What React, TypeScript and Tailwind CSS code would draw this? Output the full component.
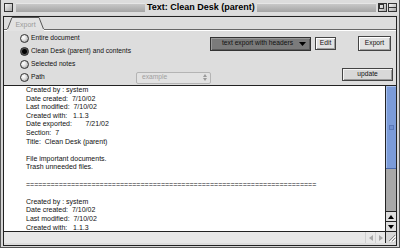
import React from "react";

function Radio({ checked }: { checked?: boolean }) {
  return (
    <div
      className={
        checked
          ? "w-[9px] h-[9px] rounded-full border border-[#222] shrink-0 bg-[radial-gradient(circle,#000_0,#000_2px,#555_3px,#bbb_100%)]"
          : "w-[9px] h-[9px] rounded-full border border-[#333] shrink-0 bg-[radial-gradient(circle_at_35%_35%,#fff_0,#e2e2e2_40%,#8f8f8f_100%)]"
      }
    />
  );
}

const lines1 = [
  "Created by : system",
  "Date created:  7/10/02",
  "Last modified:  7/10/02",
  "Created with:   1.1.3",
  "Date exported:       7/21/02",
  "Section:  7",
  "Title:  Clean Desk (parent)",
  "",
  "File important documents.",
  "Trash unneeded files.",
  "",
  "=".repeat(71),
  "",
  "Created by : system",
  "Date created:  7/10/02",
  "Last modified:  7/10/02",
  "Created with:   1.1.3",
];

export default function App() {
  return (
    <div className="w-[400px] h-[248px] bg-[#d6d6d6] flex flex-col border-x border-b border-[#555] overflow-hidden font-[family-name:Liberation_Sans,Arial,sans-serif] select-none">
      {/* Title bar */}
      <div className="h-[15px] shrink-0 flex items-center pl-[3px] pr-[2px] bg-[#dcdcdc]">
        <div className="w-[9px] h-[9px] border border-[#333] bg-[linear-gradient(135deg,#f4f4f4,#a8a8a8)] shrink-0" />
        <div className="ml-[3px] w-[129px] h-[9px] bg-[linear-gradient(#c8c8c8,#a4a4a4)] border-t border-[#e6e6e6]" />
        <div className="px-[2px] text-[9px] font-bold text-black leading-none whitespace-nowrap">
          Text: Clean Desk (parent)
        </div>
        <div className="flex-1 h-[9px] bg-[linear-gradient(#c8c8c8,#a4a4a4)] border-t border-[#e6e6e6]" />
        <div className="ml-[2px] w-[9px] h-[9px] border border-[#333] bg-[linear-gradient(135deg,#f4f4f4,#a8a8a8)] shrink-0 flex items-start justify-start">
          <div className="w-[5px] h-[5px] border border-[#333]" />
        </div>
        <div className="ml-[1px] w-[9px] h-[9px] border border-[#333] bg-[linear-gradient(135deg,#f4f4f4,#a8a8a8)] shrink-0 flex items-center">
          <div className="w-full h-[1px] bg-[#333]" />
        </div>
      </div>

      {/* Body */}
      <div className="flex-1 flex flex-col px-[2px] pt-[1px] pb-[1px]">
        <div className="flex-1 flex flex-col border border-[#222] bg-[#dddddd]">
          {/* Tab strip */}
          <div className="h-[12px] flex items-end pl-[3px]">
            <div className="relative w-[37px] h-[12px]">
              <svg className="absolute inset-0" width="37" height="12" viewBox="0 0 37 12">
                <path d="M0.5 12 L5 0.5 L32 0.5 L36.5 12" fill="#e2e2e2" stroke="#555" strokeWidth="1" />
              </svg>
              <div className="relative h-full flex items-center justify-center text-[7px] text-[#9a9a9a] leading-none pt-[2px]">
                Export
              </div>
            </div>
          </div>
          <div className="flex h-[2px]">
            <div className="w-[3px] border-t border-[#666] bg-white" />
            <div className="w-[37px] bg-[#e2e2e2]" />
            <div className="flex-1 border-t border-[#666] bg-white" />
          </div>

          {/* Panel */}
          <div className="h-[55px] flex border-b border-[#222] text-[6.7px] text-[#111] leading-none">
            <div className="w-[203px] shrink-0 flex flex-col pt-[1px] pl-[16px]">
              <div className="h-[13px] flex items-center gap-[2px]">
                <Radio />
                <span>Entire document</span>
              </div>
              <div className="h-[13px] flex items-center gap-[2px]">
                <Radio checked />
                <span>Clean Desk (parent) and contents</span>
              </div>
              <div className="h-[13px] flex items-center gap-[2px]">
                <Radio />
                <span>Selected notes</span>
              </div>
              <div className="h-[13px] flex items-center gap-[2px]">
                <Radio />
                <span className="w-[103px] shrink-0">Path</span>
                <div className="w-[75px] h-[12px] shrink-0 rounded-[2px] border border-[#b4b4b4] bg-[#e2e2e2] flex items-center pl-[5px] pr-[3px] text-[#a0a0a0]">
                  <span>example</span>
                  <svg className="ml-auto" width="4" height="7" viewBox="0 0 4 7">
                    <path d="M0 3 L4 3 L2 0 Z M0 4 L4 4 L2 7 Z" fill="#9a9a9a" />
                  </svg>
                </div>
              </div>
            </div>
            <div className="flex-1 flex flex-col pt-[5px] pb-[4px] pl-[3px]">
              <div className="flex items-center h-[15px]">
                <div className="w-[101px] h-[14px] bg-[#7b7b7b] border border-[#333] shadow-[inset_1px_1px_0_#9a9a9a,inset_-1px_-1px_0_#5a5a5a] flex items-center pl-[11px] pr-[4px] text-[#111]">
                  <span className="whitespace-nowrap">text export with headers</span>
                  <svg className="ml-auto" width="7" height="4" viewBox="0 0 7 4">
                    <path d="M0 0 L7 0 L3.5 4 Z" fill="#000" />
                  </svg>
                </div>
                <div className="ml-[4px] w-[21px] h-[13px] border border-[#444] bg-[#e2e2e2] shadow-[inset_1px_1px_0_#fff,inset_-1px_-1px_0_#a0a0a0] flex items-center justify-center">
                  Edit
                </div>
                <div className="ml-[22px] w-[33px] h-[15px] border border-[#444] bg-[#e2e2e2] shadow-[inset_1px_1px_0_#fff,inset_-1px_-1px_0_#a0a0a0] flex items-center justify-center">
                  Export
                </div>
              </div>
              <div className="mt-auto flex">
                <div className="ml-[132px] w-[51px] h-[13px] border border-[#444] bg-[#d8d8d8] shadow-[inset_1px_1px_0_#f4f4f4,inset_-1px_-1px_0_#999] flex items-center justify-center">
                  update
                </div>
              </div>
            </div>
          </div>

          {/* Text area */}
          <div className="h-[146px] flex border-b border-[#222]">
            <div className="flex-1 bg-white pl-[22px] pt-[0px] text-[7px] leading-[8.6px] text-[#111] overflow-hidden">
              {lines1.map((l, i) => (
                <div key={i} className="h-[8.6px] whitespace-pre">
                  {l === "" ? "\u00a0" : l}
                </div>
              ))}
            </div>
            <div className="w-[11px] border-l border-[#222] flex flex-col">
              <div className="h-[83px] bg-[#7b9bd8] border-b border-[#4a68a8] shadow-[inset_1px_1px_0_#a8c0ec] flex items-center justify-center">
                <div className="w-[5px] h-[5px] border border-[#5a78b8] bg-[#7090d0]" />
              </div>
              <div className="flex-1 bg-[#a8a8a8]" />
              <div className="h-[10px] border-t border-[#222] bg-[#dedede] flex items-center justify-center">
                <svg width="6" height="4" viewBox="0 0 6 4">
                  <path d="M0 4 L6 4 L3 0 Z" fill="#000" />
                </svg>
              </div>
              <div className="h-[10px] border-t border-[#222] bg-[#dedede] flex items-center justify-center">
                <svg width="6" height="4" viewBox="0 0 6 4">
                  <path d="M0 0 L6 0 L3 4 Z" fill="#000" />
                </svg>
              </div>
            </div>
          </div>

          {/* Bottom bar */}
          <div className="h-[11px] flex bg-[#e8e8e8]">
            <div className="flex-1" />
            <div className="w-[10px] flex items-center justify-center border-l border-[#d0d0d0]">
              <svg width="4" height="6" viewBox="0 0 4 6">
                <path d="M4 0 L4 6 L0 3 Z" fill="#a8a8a8" />
              </svg>
            </div>
            <div className="w-[10px] flex items-center justify-center border-l border-[#d0d0d0]">
              <svg width="4" height="6" viewBox="0 0 4 6">
                <path d="M0 0 L0 6 L4 3 Z" fill="#a8a8a8" />
              </svg>
            </div>
            <div className="w-[11px] border-l border-[#222] bg-[#d6d6d6] flex items-center justify-center">
              <svg width="9" height="9" viewBox="0 0 9 9">
                <path d="M8 2 L2 8 M8 5 L5 8" stroke="#888" strokeWidth="1" />
                <path d="M9 3 L3 9 M9 6 L6 9" stroke="#fff" strokeWidth="1" />
              </svg>
            </div>
          </div>
        </div>
      </div>
    </div>
  );
}
